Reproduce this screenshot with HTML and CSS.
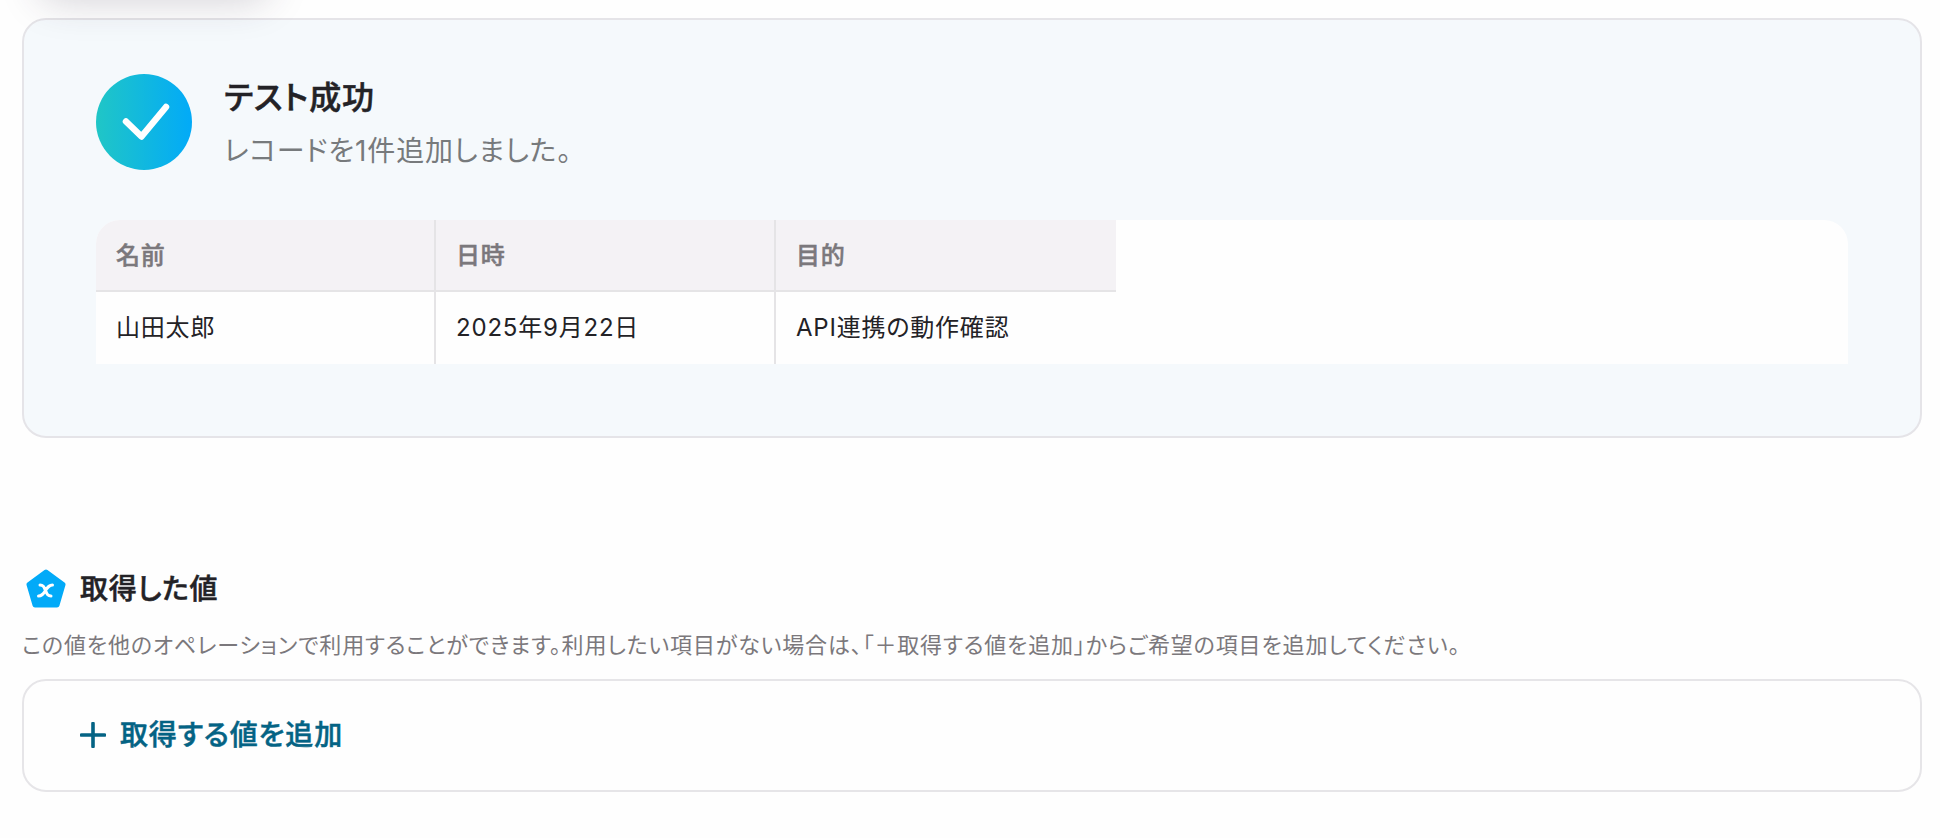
FILE: index.html
```
<!DOCTYPE html>
<html lang="ja">
<head>
  <meta charset="utf-8">
  <title>テスト成功</title>
  <link rel="stylesheet" href="styles.css">
</head>
<body>
<div class="floating"></div>
<main class="page">
  <!-- Test result -->
  <section class="result">
    <div class="result-head">
      <svg class="result-icon" viewBox="0 0 96 96" width="96" height="96">
        <defs>
          <linearGradient id="ok" x1="0" y1="0" x2="1" y2="0">
            <stop offset="0" stop-color="#20c6c6"/>
            <stop offset="1" stop-color="#02aaf8"/>
          </linearGradient>
        </defs>
        <circle cx="48" cy="48" r="48" fill="url(#ok)"/>
        <path d="M30 47.500L45.500 62.500L70 33" fill="none" stroke="#fff" stroke-width="6.500" stroke-linecap="round" stroke-linejoin="round"/>
      </svg>
      <div class="result-text">
        <h1 class="result-title">テスト成功</h1>
        <p class="result-message">レコードを1件追加しました。</p>
      </div>
    </div>
    <div class="table-wrap">
      <table class="record">
        <thead>
          <tr><th>名前</th><th>日時</th><th>目的</th></tr>
        </thead>
        <tbody>
          <tr><td>山田太郎</td><td>2025年9月22日</td><td>API連携の動作確認</td></tr>
        </tbody>
      </table>
    </div>
  </section>

  <!-- Output values -->
  <section class="values">
    <h2 class="values-title">
      <svg class="values-icon" viewBox="0 0 40 40" width="40" height="40">
        <path d="M20 3L37 15.500L31 36H9L3 15.500Z" fill="#02aaf8" stroke="#02aaf8" stroke-width="5" stroke-linejoin="round"/>
        <path d="M14 16C17.500 16 18 18 19.500 21.500C21 25 21.500 27 25 27M26.500 16C23 16 22 18 19.500 21.500C17 25 16 27 12.500 27" fill="none" stroke="#fff" stroke-width="3" stroke-linecap="round"/>
      </svg>
      <span>取得した値</span>
    </h2>
    <p class="values-note">この値を他のオペレーションで利用することができます。利用したい項目がない場合は、「＋取得する値を追加」からご希望の項目を追加してください。</p>
    <div class="values-box">
      <button class="add" type="button">
        <svg viewBox="0 0 26 26" width="26" height="26">
          <path d="M13 1.500V24.500M1.500 13H24.500" stroke="#046384" stroke-width="3.600" stroke-linecap="round"/>
        </svg>
        <span>取得する値を追加</span>
      </button>
    </div>
  </section>
</main>
</body>
</html>
```
FILE: styles.css
```
*{
  box-sizing: border-box;
  margin: 0;
  padding: 0;
}

body{
  background: #fefefe;
  color: #232226;
  font-family: Inter, "Noto Sans CJK JP", sans-serif;
  font-feature-settings: "palt";
  overflow: hidden;
}

/* Panel above the fold, only its shadow reaches in */
.floating{
  position: absolute;
  left: 40px;
  top: -64px;
  width: 228px;
  height: 56px;
  border-radius: 16px;
  box-shadow: 0 8px 40px rgba(50,40,70,0.22);
}

.page{
  padding: 18px 18px 0 22px;
}

/* Result card */
.result{
  height: 420px;
  padding: 54px 72px 72px;
  border: 2px solid #e5e4e8;
  border-radius: 24px;
  background: #f5f9fc;
}
.result-head{
  display: flex;
  gap: 32px;
}
.result-icon{
  flex: none;
}
/* Between medium and bold */
.result-title,
.record th,
.values-title,
.add{
  font-weight: 500;
  -webkit-text-stroke: 0.5px currentColor;
}
.result-title{
  padding-top: 1px;
  font-size: 32px;
  line-height: 46px;
  letter-spacing: 0.9px;
}
.result-message{
  margin-top: 9px;
  font-size: 28px;
  line-height: 42px;
  letter-spacing: 0.85px;
  color: #777a7c;
}

/* Record table */
.table-wrap{
  height: 144px;
  margin-top: 48px;
  border-radius: 24px 24px 0 0;
  background: #fefefe;
  overflow: hidden;
}
.record{
  width: 1020px;
  table-layout: fixed;
  border-collapse: separate;
  border-spacing: 0;
  font-size: 24px;
  letter-spacing: 0.8px;
}
.record th,
.record td{
  height: 72px;
  padding: 0 20px 5px;
  text-align: left;
  border-right: 2px solid #e5e4e6;
}
.record th{
  padding-bottom: 4px;
  background: #f4f2f5;
  border-bottom: 2px solid #e5e4e6;
  color: #7b787c;
}
.record th:last-child,
.record td:last-child{
  border-right: 0;
}

/* Values */
.values{
  margin-top: 131px;
}
.values-title{
  display: flex;
  align-items: center;
  gap: 14px;
  height: 40px;
  padding-left: 4px;
  font-size: 28px;
  letter-spacing: 0.8px;
}
.values-title span{
  padding-bottom: 5px;
}
.add span{
  padding-bottom: 4px;
}
.values-note{
  margin-top: 19px;
  font-size: 22px;
  line-height: 34px;
  letter-spacing: 0.84px;
  color: #7b787c;
  white-space: nowrap;
}
.values-box{
  height: 113px;
  margin-top: 17px;
  padding: 0 0 2px 56px;
  display: flex;
  align-items: center;
  border: 2px solid #e6e5e8;
  border-radius: 24px;
}
.add{
  display: flex;
  align-items: center;
  gap: 14px;
  border: 0;
  background: none;
  color: #046384;
  font-family: inherit;
  font-feature-settings: "palt";
  font-size: 28px;
  letter-spacing: 0.84px;
}
```
